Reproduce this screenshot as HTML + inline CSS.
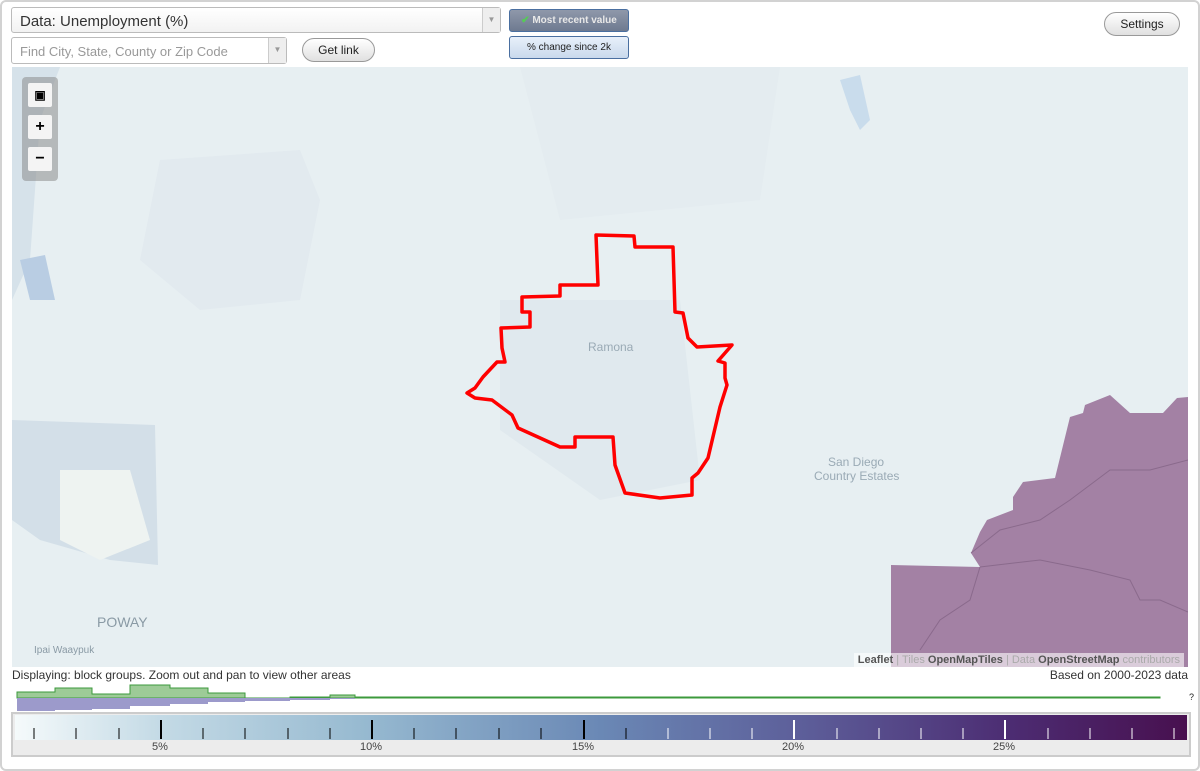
<!DOCTYPE html>
<html><head><meta charset="utf-8"><style>
*{box-sizing:border-box;margin:0;padding:0}
body{width:1200px;height:771px;background:#fff;font-family:"Liberation Sans",sans-serif;position:relative;overflow:hidden}
.frame{position:absolute;left:0;top:0;width:1200px;height:771px;border:2px solid #d2d2d2;border-radius:6px}
.sel{position:absolute;left:11px;top:7px;width:490px;height:26px;border:1px solid #bbb;border-radius:3px;background:linear-gradient(#fff,#f2f2f2);font-size:15px;color:#333;padding:5px 8px}
.sel .arr,.find .arr{position:absolute;right:0;top:0;width:18px;height:100%;border-left:1px solid #ccc;background:#eee;color:#999;font-size:8px;text-align:center;line-height:24px}
.find{position:absolute;left:11px;top:37px;width:276px;height:27px;border:1px solid #bbb;border-radius:3px;background:#fff;font-size:13px;color:#999;padding:6px 8px}
.btn{position:absolute;border:1px solid #999;border-radius:12px;background:linear-gradient(#fff,#e0e0e0);font-size:12px;color:#222;text-align:center}
.tog{position:absolute;left:509px;width:120px;height:23px;border:1px solid #4a6fa0;border-radius:3px;font-size:10px;text-align:center;line-height:21px}
.map{position:absolute;left:12px;top:67px;width:1176px;height:600px;background:#e7eff2;overflow:hidden}
.ctl{position:absolute;left:10px;top:10px;width:36px;height:104px;background:rgba(140,140,140,.55);border-radius:4px}
.ctl div{position:absolute;left:6px;width:24px;height:24px;background:#f4f4f4;border-radius:2px;font-weight:bold;text-align:center;line-height:24px;font-size:16px}
.attr{position:absolute;right:4px;bottom:0;background:rgba(255,255,255,.6);font-size:11px;color:#555;padding:1px 4px}
.attr span{color:#aaa}
</style></head><body>
<div class="frame"></div>
<div class="sel">Data: Unemployment (%)<div class="arr">▼</div></div>
<div class="find">Find City, State, County or Zip Code<div class="arr">▼</div></div>
<div class="btn" style="left:302px;top:38px;width:73px;height:24px;line-height:22px">Get link</div>
<div class="tog" style="top:9px;background:linear-gradient(#8f98aa,#6e7a90);color:#e8e8e8;font-weight:bold"><span style="color:#5c5;">✔</span> Most recent value</div>
<div class="tog" style="top:36px;background:linear-gradient(#e8f0fa,#c9d9ec);color:#222">% change since 2k</div>
<div class="btn" style="left:1104px;top:12px;width:76px;height:24px;line-height:22px">Settings</div>

<div class="map">
<svg width="1176" height="600" style="position:absolute;left:0;top:0">
<g transform="translate(-12,-67)">
<path d="M12 67 L60 67 L40 120 L30 260 L12 300 Z" fill="#d6e2ea"/>
<path d="M160 160 L300 150 L320 200 L300 300 L200 310 L140 260 Z" fill="#e2eaef"/>
<path d="M20 260 L45 255 L55 300 L30 300 Z" fill="#b9cde3"/>
<path d="M12 420 L155 425 L158 565 L110 560 L40 540 L12 520 Z" fill="#d3dfe8"/>
<path d="M60 470 L130 470 L150 540 L100 560 L60 540 Z" fill="#eef3f1"/>
<path d="M520 67 L780 67 L760 200 L560 220 Z" fill="#e4ecf0"/>
<path d="M840 80 L860 75 L870 120 L860 130 L850 110 Z" fill="#c9dcec"/>
<path d="M500 300 L680 300 L700 480 L600 500 L500 430 Z" fill="#e0e9ee"/>
<path d="M891 565 L980 567 L971 553 L980 532 L987 520 L1013 510 L1013 497 L1023 482 L1055 478 L1070 417 L1083 413 L1085 405 L1110 395 L1130 413 L1163 413 L1177 398 L1188 397 L1188 667 L891 667 Z" fill="#a381a4"/>
<path d="M971 553 L1000 530 L1040 520 L1070 500 L1110 470 L1150 470 L1188 460 M980 567 L1040 560 L1090 570 L1130 580 L1140 600 L1160 600 L1188 612 M980 567 L970 600 L940 620 L920 650" stroke="#8a6a8c" fill="none"/>
<path d="M596 235 L634 236 L635 247 L673 247 L675 312 L683 313 L688 338 L697 347 L732 345 L718 361 L725 363 L725 378 L727 385 L720 407 L708 458 L698 473 L692 478 L692 495 L660 498 L625 493 L615 465 L613 437 L575 437 L575 447 L560 447 L518 428 L512 415 L492 400 L475 398 L467 393 L475 388 L483 377 L497 362 L505 362 L502 348 L501 328 L530 327 L530 312 L522 312 L522 297 L560 296 L560 285 L598 285 Z" fill="none" stroke="#ff0000" stroke-width="3.5" stroke-linejoin="round"/>
<text x="588" y="351" font-size="12" fill="#9aaab5" font-family="Liberation Sans">Ramona</text>
<text x="828" y="466" font-size="12" fill="#9aaab5" font-family="Liberation Sans">San Diego</text>
<text x="814" y="480" font-size="12" fill="#9aaab5" font-family="Liberation Sans">Country Estates</text>
<text x="97" y="627" font-size="14" fill="#8a9aa5" font-family="Liberation Sans">POWAY</text>
<text x="34" y="653" font-size="10" fill="#8a9aa5" font-family="Liberation Sans">Ipai Waaypuk</text>
</g></svg>
<div class="ctl"><div style="top:6px;font-size:12px">▣</div><div style="top:38px">+</div><div style="top:70px">−</div></div>
<div class="attr"><b>Leaflet</b> <span>| Tiles</span> <b>OpenMapTiles</b> <span>| Data</span> <b>OpenStreetMap</b> <span>contributors</span></div>
</div>

<div style="position:absolute;left:12px;top:668px;font-size:12px;color:#333">Displaying: block groups. Zoom out and pan to view other areas</div>
<div style="position:absolute;right:12px;top:668px;font-size:12px;color:#333">Based on 2000-2023 data</div>

<svg width="1200" height="30" style="position:absolute;left:0;top:684px">
<path d="M17 14 L17 8 L55 8 L55 4 L92 4 L92 10 L130 10 L130 1 L170 1 L170 4 L208 4 L208 9 L245 9 L245 14 L290 14 L290 13 L330 13 L330 11 L355 11 L355 13 L1160 13 L1160 14 Z" fill="#9dcb97" stroke="#3c9a3c" stroke-width="1"/>
<path d="M17 14 L17 27 L55 27 L55 26 L92 26 L92 25 L130 25 L130 22 L170 22 L170 20 L208 20 L208 18 L245 18 L245 17 L290 17 L290 16 L330 16 L330 15 L355 15 L355 14 Z" fill="#9c9acb"/>
<text x="1189" y="16" font-size="9" fill="#222" font-family="Liberation Sans">?</text>
</svg>

<div style="position:absolute;left:11px;top:712px;width:1180px;height:45px;border:2px solid #ccc;background:#ececec">
<div style="position:absolute;left:2px;top:1px;width:1172px;height:25px;background:linear-gradient(90deg,#f5fafb 0%,#c5dbe6 12%,#96b9d0 30%,#6a88b5 50%,#5c5c98 68%,#4c2c72 85%,#48104f 100%)"></div>
<svg width="1176" height="28" style="position:absolute;left:0;top:0">
<g stroke="#000" stroke-width="1">
<line x1="21" y1="14" x2="21" y2="25"/><line x1="63" y1="14" x2="63" y2="25"/><line x1="106" y1="14" x2="106" y2="25"/>
<line x1="148" y1="6" x2="148" y2="25" stroke-width="2"/>
<line x1="190" y1="14" x2="190" y2="25"/><line x1="232" y1="14" x2="232" y2="25"/><line x1="275" y1="14" x2="275" y2="25"/><line x1="317" y1="14" x2="317" y2="25"/>
<line x1="359" y1="6" x2="359" y2="25" stroke-width="2"/>
<line x1="401" y1="14" x2="401" y2="25"/><line x1="443" y1="14" x2="443" y2="25"/><line x1="486" y1="14" x2="486" y2="25"/><line x1="528" y1="14" x2="528" y2="25"/>
<line x1="571" y1="6" x2="571" y2="25" stroke-width="2"/>
<line x1="613" y1="14" x2="613" y2="25"/>
</g>
<g stroke="#fff" stroke-width="1">
<line x1="655" y1="14" x2="655" y2="25"/><line x1="697" y1="14" x2="697" y2="25"/><line x1="739" y1="14" x2="739" y2="25"/>
<line x1="781" y1="6" x2="781" y2="25" stroke-width="2"/>
<line x1="824" y1="14" x2="824" y2="25"/><line x1="866" y1="14" x2="866" y2="25"/><line x1="908" y1="14" x2="908" y2="25"/><line x1="950" y1="14" x2="950" y2="25"/>
<line x1="992" y1="6" x2="992" y2="25" stroke-width="2"/>
<line x1="1035" y1="14" x2="1035" y2="25"/><line x1="1077" y1="14" x2="1077" y2="25"/><line x1="1119" y1="14" x2="1119" y2="25"/><line x1="1161" y1="14" x2="1161" y2="25"/>
</g></svg>
<div style="position:absolute;top:27px;left:0;width:100%;font-size:11px;color:#444">
<span style="position:absolute;left:139px">5%</span><span style="position:absolute;left:347px">10%</span><span style="position:absolute;left:559px">15%</span><span style="position:absolute;left:769px">20%</span><span style="position:absolute;left:980px">25%</span></div>
</div>
</body></html>
